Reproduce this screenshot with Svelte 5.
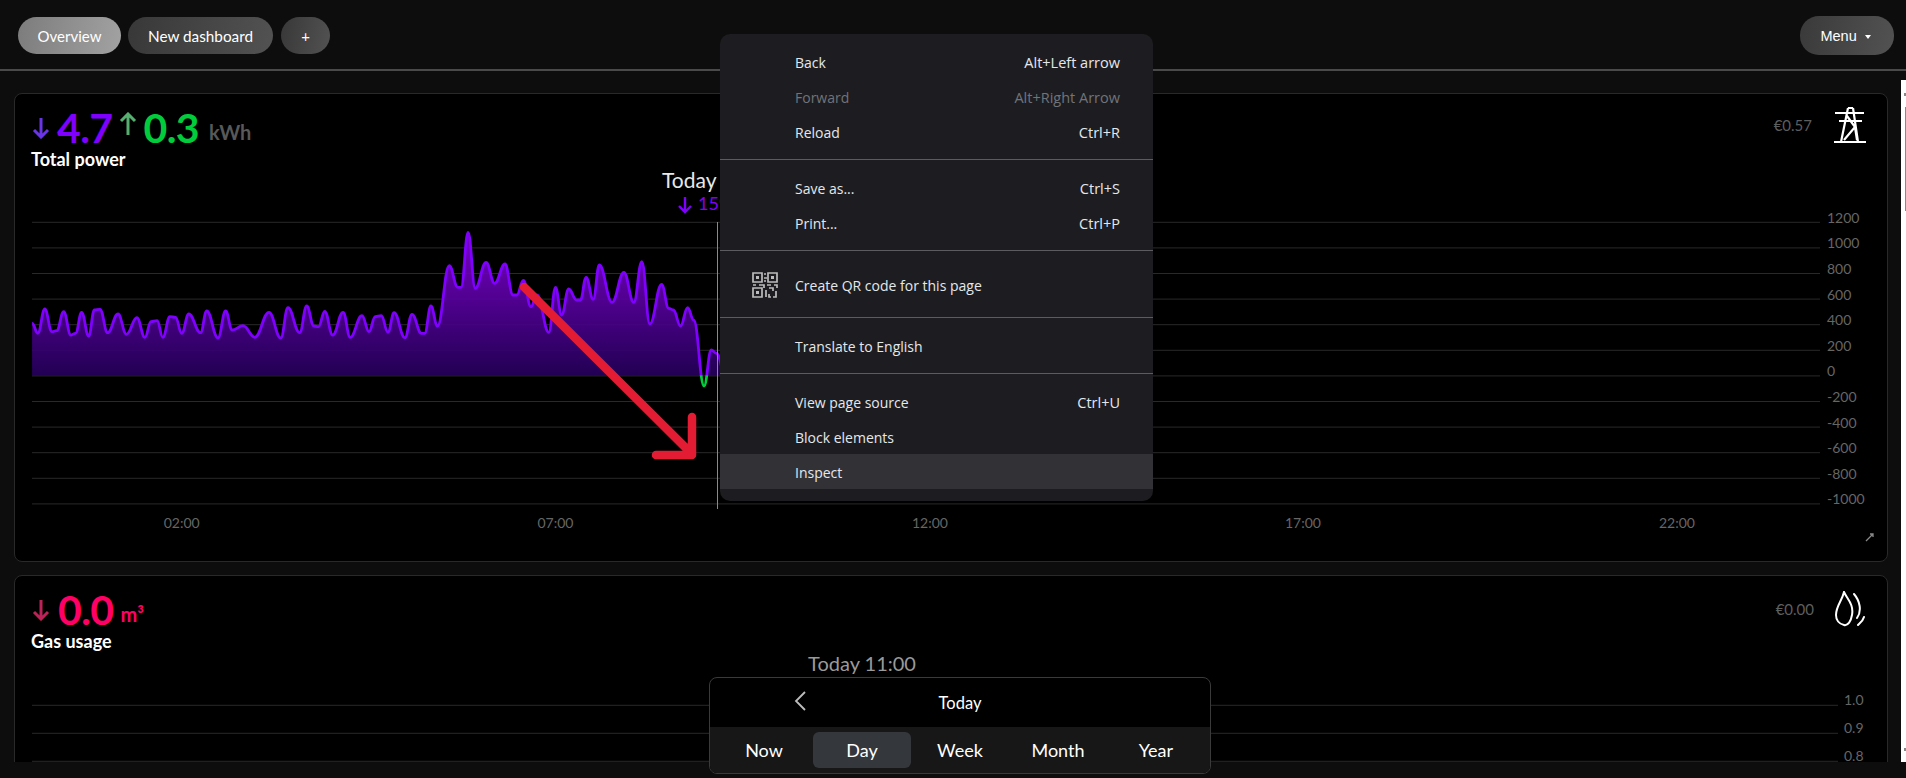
<script>
  const raw = [[68,370],[80,400],[95,327],[110,395],[120,392],[135,335],[150,405],[160,400],[173,337],[188,408],[200,330],[212,328],[228,398],[250,342],[268,403],[290,353],[307,412],[320,365],[333,362],[345,412],[360,350],[372,352],[385,400],[400,342],[425,398],[438,333],[462,414],[478,333],[492,390],[515,377],[540,412],[570,337],[595,414],[610,323],[635,398],[650,318],[665,378],[675,380],[688,334],[705,405],[727,337],[742,412],[767,347],[782,395],[795,350],[808,347],[822,397],[835,338],[858,413],[873,343],[893,400],[900,400],[913,318],[927,378],[952,197],[970,262],[977,262],[992,97],[1007,265],[1030,187],[1048,250],[1070,192],[1087,285],[1095,285],[1109,241],[1125,320],[1138,285],[1163,397],[1177,262],[1190,345],[1205,267],[1222,300],[1230,300],[1242,232],[1257,298],[1270,195],[1297,307],[1322,217],[1343,307],[1360,185],[1377,372],[1402,253],[1417,325],[1427,330],[1442,378],[1457,323],[1470,360],[1492,558],[1507,450],[1518,460],[1540,540]];
  const pts = raw.map(([x, y]) => [x / 2.119, 200 + y / 3]);
  let line = `M${pts[0][0].toFixed(1)} ${pts[0][1].toFixed(1)}`;
  for (let i = 1; i < pts.length; i++) {
    const [a, b] = pts[i - 1];
    const [c, d] = pts[i];
    const m = (c - a) * 0.42;
    line += `C${(a + m).toFixed(1)} ${b.toFixed(1)} ${(c - m).toFixed(1)} ${d.toFixed(1)} ${c.toFixed(1)} ${d.toFixed(1)}`;
  }
  const last = pts[pts.length - 1];
  const area = `${line}L${last[0].toFixed(1)} 375.3L${pts[0][0].toFixed(1)} 375.3Z`;

  const powerLabels = ['1200','1000','800','600','400','200','0','-200','-400','-600','-800','-1000'];
  const powerGrid = powerLabels.map((label, i) => ({ label, y: 222.3 + i * 25.6 }));
  const hours = [['02:00',181.7],['07:00',555.4],['12:00',930],['17:00',1303],['22:00',1677]];
  const gasGrid = [['1.0',705.3],['0.9',733.3],['0.8',761.3]];
  const periods = ['Now','Day','Week','Month','Year'];
  const groups = [
    [{ t:'Back', s:'Alt+Left arrow' },{ t:'Forward', s:'Alt+Right Arrow', off:true },{ t:'Reload', s:'Ctrl+R' }],
    [{ t:'Save as...', s:'Ctrl+S' },{ t:'Print...', s:'Ctrl+P' }],
    [{ t:'Create QR code for this page', qr:true }],
    [{ t:'Translate to English' }],
    [{ t:'View page source', s:'Ctrl+U' },{ t:'Block elements' },{ t:'Inspect', hot:true }]
  ];
</script>

<div class="page">
  <header class="top">
    <nav class="tabs">
      <button class="pill active">Overview</button>
      <button class="pill wide">New dashboard</button>
      <button class="pill plus">+</button>
    </nav>
    <button class="pill menu-btn">Menu <span class="caret"></span></button>
  </header>

  <div class="body">
    <main class="scroll">
      <section class="card power">
        <div class="head">
          <div>
            <div class="reading">
              <svg class="arrow" viewBox="0 0 18 22"><path d="M9 1V20M2 13l7 7 7-7" fill="none" stroke="#6a35e8" stroke-width="3"/></svg>
              <span class="num purple">4.7</span>
              <svg class="arrow up" viewBox="0 0 18 24"><path d="M9 23V2M2 9l7-7 7 7" fill="none" stroke="#55b070" stroke-width="3"/></svg>
              <span class="num green">0.3</span>
              <span class="unit">kWh</span>
            </div>
            <div class="title">Total power</div>
          </div>
          <div class="side">
            <span class="cost">€0.57</span>
            <svg class="icon" viewBox="0 0 34 36" fill="none" stroke="#fff" stroke-width="2.2"><path d="M1 35H33M2 6H31M6 14H29M15 1H20M15 1 8 35M20 1 25 35M14 9 22 20 11 33M22 20 24 33"/></svg>
          </div>
        </div>
        <svg class="chart" viewBox="15 168 1872 378" width="1872" height="378">
          <defs>
            <linearGradient id="fill" gradientUnits="userSpaceOnUse" x1="0" y1="222" x2="0" y2="375">
              <stop offset="0" stop-color="#8a00e0"/><stop offset="1" stop-color="#25005a"/>
            </linearGradient>
            <clipPath id="above"><rect x="0" y="200" width="1000" height="175.3"/></clipPath>
            <clipPath id="below"><rect x="0" y="375.3" width="1000" height="100"/></clipPath>
          </defs>
          {#each powerGrid as g}
            <line x1="32" x2="1820" y1={g.y} y2={g.y} class="grid"/>
            <text x="1827" y={g.y + 0.5} class="axis">{g.label}</text>
          {/each}
          <path d={area} fill="url(#fill)" fill-opacity="0.92" clip-path="url(#above)"/>
          {#each hours as [h, x]}
            <text x={x} y="528" class="axis mid">{h}</text>
          {/each}
          <path d={line} class="curve" stroke="#8000ff" clip-path="url(#above)"/>
          <path d={line} class="curve" stroke="#00cc3c" clip-path="url(#below)"/>
          <line x1="717.5" x2="717.5" y1="222" y2="509" stroke="#8a8a8a"/>
          <text x="662" y="188" class="stamp">Today 09:00</text>
          <path d="M685 197V212M679 206 685 212 691 206" fill="none" stroke="#7f00ff" stroke-width="2.400"/>
          <text x="698" y="210" class="hover">159 W</text>
          <path d="M524 287 691 453M692 417V455H656" fill="none" stroke="#e41c33" stroke-width="8.500" stroke-linecap="round" stroke-linejoin="round"/>
          <path d="M1866 541l7-7M1870 534h3v3" fill="none" stroke="#8a8a8a" stroke-width="1.300"/>
        </svg>
      </section>

      <section class="card gas">
        <div class="head">
          <div>
            <div class="reading">
              <svg class="arrow" viewBox="0 0 18 22"><path d="M9 1V20M2 13l7 7 7-7" fill="none" stroke="#bd2358" stroke-width="3"/></svg>
              <span class="num pink">0.0</span>
              <span class="unit pink">m³</span>
            </div>
            <div class="title">Gas usage</div>
          </div>
          <div class="side">
            <span class="cost">€0.00</span>
            <svg class="icon flame" viewBox="0 0 30 36" fill="none" stroke="#fff" stroke-width="2" stroke-linecap="round"><path d="M9 1C12 8 19 13 17 24 16 30 13 35 9 34 4 33 1 29 1 24 1 15 7 10 9 1ZM19 3C25 10 27 20 22 27M29 26C28 30 25 32 23 34"/></svg>
          </div>
        </div>
        <svg class="chart" viewBox="15 650 1872 112" width="1872" height="112">
          {#each gasGrid as [label, y]}
            <line x1="32" x2="1838" y1={y} y2={y} class="grid"/>
            <text x="1844" y={y} class="axis">{label}</text>
          {/each}
          <text x="862" y="671" class="stamp dim">Today 11:00</text>
        </svg>
      </section>
    </main>
    <aside class="bar"><i class="tick t1"></i><i class="thumb"></i><i class="tick t2"></i></aside>
  </div>
  <div class="foot"></div>

  <div class="range">
    <div class="range-top">
      <svg class="back" viewBox="0 0 12 20"><path d="M11 1 2 10l9 9" fill="none" stroke="#bdbdbd" stroke-width="1.800"/></svg>
      <span>Today</span>
    </div>
    <div class="range-tabs">
      {#each periods as p}
        <button class:on={p === 'Day'}>{p}</button>
      {/each}
    </div>
  </div>

  <div class="ctx">
    {#each groups as group, gi}
      {#if gi}<hr/>{/if}
      {#each group as item}
        <div class="item" class:off={item.off} class:hot={item.hot} class:tall={item.qr}>
          {#if item.qr}
            <svg class="qr" viewBox="0 0 26 26" fill="none" stroke="#bcbcbc" stroke-width="1.700">
              <path d="M1 1h9v9H1zM16 1h9v9h-9zM1 16h9v9H1z"/>
              <path d="M4 4h3v3H4zM19 4h3v3h-3zM4 19h3v3H4z" fill="#bcbcbc" stroke="none"/>
              <path d="M12 2h2M12 6h3M12 9h2M1 13h3M7 13h5v3M15 13h4M22 13h3v3M14 18v7M17 16h4v3M17 22v3h2M24 19v6h-3"/>
            </svg>
          {/if}
          <span>{item.t}</span>
          {#if item.s}<span class="short">{item.s}</span>{/if}
        </div>
      {/each}
    {/each}
  </div>
</div>

<style>
  :global(body) { margin: 0; background: #0d0d0d; }
  .page { position: relative; width: 1906px; height: 778px; overflow: hidden; background: #0d0d0d; font-family: Lato, "Liberation Sans", sans-serif; color: #fff; }

  .top { height: 69px; box-sizing: border-box; padding: 17px 12px 0 18px; display: flex; justify-content: space-between; align-items: flex-start; }
  .tabs { display: flex; gap: 7px; }
  .pill { width: 103px; height: 37px; padding: 0; border: 0; border-radius: 19px; background: linear-gradient(100deg, #383838, #525252); color: #fff; font: 15px Lato, sans-serif; }
  .pill.wide { width: 145px; font-size: 15.300px; }
  .pill.active { background: linear-gradient(100deg, #7c7c7c, #a2a2a2); }
  .pill.plus { width: 49px; margin-left: 1px; }
  .menu-btn { width: 94px; height: 39px; margin-top: -1px; padding-right: 2.400px; font-family: "Liberation Sans", sans-serif; font-size: 14.500px; background: linear-gradient(100deg, #3a3a3a, #525252); }
  .caret { display: inline-block; margin-left: 4.400px; vertical-align: 2px; border: 3.500px solid transparent; border-top: 4px solid #fff; border-bottom: 0; }

  .body { border-top: 2px solid #4a4a4a; height: 691px; display: flex; }
  .scroll { width: 1901px; height: 691px; box-sizing: border-box; overflow: hidden; padding: 22px 13px 0 14px; display: flex; flex-direction: column; gap: 13px; flex: none; }
  .card { flex: none; box-sizing: border-box; background: #000; border: 1px solid #292929; border-radius: 8px; position: relative; }
  .power { height: 469px; }
  .gas { height: 210px; }
  .head { display: flex; justify-content: space-between; align-items: flex-start; height: 0; padding: 0 20px 0 16px; }
  .reading { display: flex; align-items: flex-end; height: 48px; line-height: 48px; margin-left: 1px; }
  .power .reading { margin-top: 6px; }
  .gas .reading { margin-top: 6px; }
  .num { font-size: 41px; font-weight: 700; line-height: 40px; letter-spacing: -0.600px; }
  .purple { color: #7f00ff; margin-left: 7px; }
  .green { color: #00cc3c; margin-left: 7px; }
  .pink { color: #ff0066; margin-left: 8px; }
  .unit { font-size: 20px; font-weight: 700; line-height: 32px; margin-left: 10px; color: #585858; }
  .unit.pink { color: #ff0066; margin-left: 7px; }
  .arrow { width: 18px; height: 22px; margin-bottom: 9px; }
  .arrow.up { height: 24px; margin-bottom: 12px; margin-left: 6px; }
  .title { font-size: 18px; font-weight: 700; line-height: 20px; margin-top: 1px; }
  .side { display: flex; align-items: center; gap: 21px; margin-top: 13px; }
  .cost { font-size: 15px; color: #5e5e5e; }
  .icon { width: 34px; height: 36px; }
  .flame { width: 30px; margin-right: 2px; }
  .gas .side { margin-top: 15px; }
  .chart { display: block; }
  .power .chart { margin-top: 74px; }
  .gas .chart { margin-top: 74px; }
  .grid { stroke: #fff; stroke-opacity: 0.16; stroke-width: 1; }
  .axis { font: 14px Lato, sans-serif; fill: #666; }
  .mid { text-anchor: middle; }
  .curve { fill: none; stroke-width: 2.800; }
  .stamp { font: 21px Lato, sans-serif; fill: #e8e8e8; }
  .stamp.dim { font-size: 20px; fill: #9a9a9a; text-anchor: middle; }
  .hover { font: 18px Lato, sans-serif; fill: #7f00ff; }

  .bar { position: relative; width: 5px; height: 682px; margin-top: 9px; background: #fff; }
  .thumb { position: absolute; left: 4px; top: 27px; width: 1px; height: 104px; background: #8a8a8a; }
  .tick { position: absolute; left: 3px; width: 2px; height: 3px; background: #888; }
  .t1 { top: 13px; }
  .t2 { top: 668px; }
  .foot { height: 16px; }

  .range { position: absolute; left: 709px; top: 677px; width: 502px; height: 97px; box-sizing: border-box; background: #000; border: 1px solid #3a3a3a; border-radius: 8px; overflow: hidden; }
  .range-top { height: 49px; display: grid; place-items: center; position: relative; font-size: 16.500px; }
  .back { position: absolute; left: 84px; top: 13px; width: 12px; height: 20px; }
  .range-tabs { height: 46px; background: #171717; display: grid; grid-template-columns: repeat(5, 98px); padding: 5px 5px 0; box-sizing: border-box; }
  .range-tabs button { height: 36px; border: 0; border-radius: 6px; background: none; color: #fff; font: 18px Lato, sans-serif; padding: 0; }
  .range-tabs .on { background: #34373b; }

  .ctx { position: absolute; left: 720px; top: 34px; width: 433px; height: 467px; box-sizing: border-box; padding-top: 11px; background: #1d1d21; border-radius: 10px; font: 14px "Open Sans", sans-serif; color: #e4e8ec; }
  .ctx hr { margin: 9px 0 11px; border: 0; height: 1px; background: #5c5c60; }
  .item { position: relative; height: 35px; display: flex; align-items: center; justify-content: space-between; padding: 0 33px 0 75px; }
  .item.tall { height: 46px; }
  .item.off { color: #70747a; }
  .item.hot { box-sizing: border-box; background: #323236; margin-top: -1px; padding-top: 2px; }
  .qr { position: absolute; left: 32px; top: 10px; width: 26px; height: 26px; }
  .short { font-size: 14.500px; }
</style>
